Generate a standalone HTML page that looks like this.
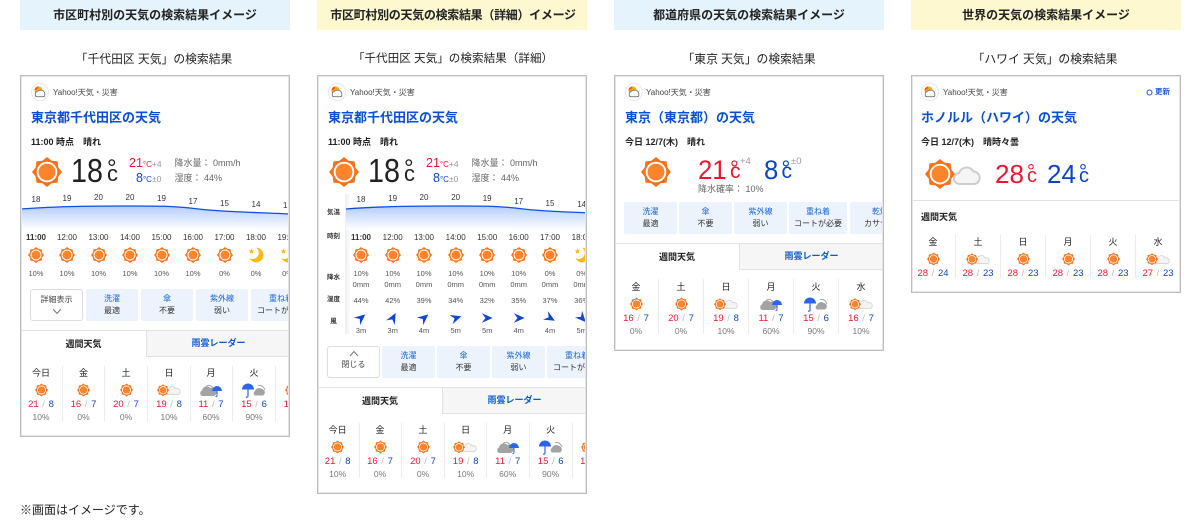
<!DOCTYPE html>
<html lang="ja"><head><meta charset="utf-8"><title>天気の検索結果イメージ</title>
<style>
*{box-sizing:border-box}
html,body{margin:0;padding:0;width:1200px;height:520px;overflow:hidden;background:#fff}
body{position:relative;font-family:"Liberation Sans","Noto Sans CJK JP",sans-serif;color:#333;filter:blur(.3px)}
.a,.c,.clip>*,body>span,body>svg{position:absolute}
.a,.c{line-height:12px;white-space:nowrap}
.c{width:120px;margin-left:-60px;text-align:center}
.clip{position:absolute;left:0;top:0;width:1200px;height:520px}
.hd{position:absolute;top:0;width:270px;height:30px;line-height:30px;text-align:center;font-size:12px;font-weight:700;color:#222}
.bl{background:#e5f3fd}.ye{background:#fdf8cf}
.sub{position:absolute;top:51px;width:270px;text-align:center;font-size:11.8px;line-height:16px;color:#222}
.bd{position:absolute;border:1px solid #bdbdbd;box-shadow:inset 0 0 0 1px #e6e6e6;background:transparent}
.y{font-size:8px;color:#444;top:87px}
.ti{font-size:13px;font-weight:700;color:#0b50d0;top:110px;line-height:16px}
.dt{font-size:9px;font-weight:700;color:#222;top:136px}
.g{font-size:9px;color:#666}
.tp{font-size:8px;color:#333}
.h{position:absolute;width:32px;margin-left:-16px;text-align:center;font-size:7.5px;line-height:12px;color:#555;white-space:nowrap}
.h i{display:block;font-style:normal;font-size:8px;height:14px;line-height:14px;color:#333;margin-left:-8px;width:48px}
.h svg{display:block;width:16px;height:16px;margin:2px auto 5px}
.h u{display:block;text-decoration:none;height:12px}
.h u.m{height:10px;line-height:10px}
.h u.hu{margin-top:5px}
.h svg.w{width:12px;height:12px;margin:5px auto 1px}
.btn{position:absolute;width:53px;height:32px;border:1px solid #ddd;border-radius:3px;background:#fff;font-size:8px;line-height:12px;text-align:center;color:#444}
.ch{position:absolute;height:32px;background:#edf3fd;border-radius:2px;text-align:center;font-size:8px;line-height:12px;padding-top:4px;color:#333;white-space:nowrap;overflow:hidden}
.ch b{display:block;font-weight:400;color:#1765d8}
.tl{position:absolute;height:26px;background:#fff;line-height:26px;text-align:center;font-size:9px;font-weight:700;color:#222}
.tr{position:absolute;height:27px;background:#f6f6f6;border-top:1px solid #e2e2e2;border-left:1px solid #e2e2e2;border-bottom:1px solid #e2e2e2;line-height:25px;text-align:center;font-size:9px;font-weight:700;color:#0b5bd0}
.ln{position:absolute;height:1px;background:#e2e2e2}
.sp{position:absolute;width:1px;background:#ececec}
.k{position:absolute;width:44px;margin-left:-22px;text-align:center;white-space:nowrap;font-size:8.5px;line-height:12px;color:#777}
.k i{display:block;font-style:normal;font-size:9px;line-height:14px;color:#222}
.k svg{display:block;height:16px;margin:2px auto 1px}
.k span{display:block;font-size:9.5px;line-height:12px;color:#bbb;word-spacing:1px}
.k span b{font-weight:400}
.r{color:#f0152f}.b{color:#0b44c8}
.big{font-size:33px;line-height:32px;transform:scaleX(.87);transform-origin:left}
.big3{font-size:27px;line-height:32px;transform:scaleX(.95);transform-origin:left}
.lab{font-size:6.5px;font-weight:700}
</style></head><body>
<svg width="0" height="0" style="position:absolute"><defs>
<linearGradient id="gr" x1="0" y1="0" x2="0" y2="1"><stop offset="0" stop-color="#b4cdfa"/><stop offset="1" stop-color="#fff"/></linearGradient>
<symbol id="sun" viewBox="0 0 32 32"><polygon fill="#f6721a" points="32,16 28,21 27.300,27.300 21,28 16,32 11,28 4.700,27.300 4,21 0,16 4,11 4.700,4.700 11,4 16,0 21,4 27.300,4.700 28,11"/><circle cx="16" cy="16" r="11" fill="#fff"/><circle cx="16" cy="16" r="9" fill="#fd842b"/></symbol>
<symbol id="moon" viewBox="0 0 16 16"><path fill="#fdb913" d="M8 .8A7.300 7.300 0 1 1 1.500 11 A5.500 5.500 0 0 0 8 .8Z"/><polygon fill="#fdb913" points="3.500,1.500 4.300,3.300 6.200,3.500 4.800,4.700 5.200,6.600 3.500,5.600 1.800,6.600 2.200,4.700 .8,3.500 2.700,3.300"/></symbol>
<symbol id="cl" viewBox="0 0 26 16"><path fill="#f4f4f4" stroke="#cfcfcf" stroke-width="1.200" d="M5 14.500A4 4 0 0 1 4.500 7 6 6 0 0 1 16 5.500 4.600 4.600 0 0 1 20.500 14.500Z"/></symbol>
<symbol id="clb" viewBox="0 0 28 22"><path fill="#f5f5f5" stroke="#cdcdcd" stroke-width="2" d="M7 21A5.500 5.500 0 0 1 6 10 8 8 0 0 1 20.500 8.500 6.300 6.300 0 0 1 21.500 21Z"/></symbol>
<symbol id="sc" viewBox="0 0 26 16"><use href="#cl" x="9" y="0" width="17" height="11" transform="translate(0 3)"/><use href="#sun" x="0" y="2" width="12.500" height="12.500"/></symbol>
<symbol id="cu" viewBox="0 0 24 16"><path fill="#a3a3a3" d="M3 14A3 3 0 0 1 3 8.500 5 5 0 0 1 11.500 6 4 4 0 0 1 15 14Z"/><path fill="none" stroke="#a3a3a3" d="M7 4.500Q11 1.500 14 6"/><path fill="#2b66e8" d="M13 9A5 5 0 0 1 23 9Z"/><path fill="none" stroke="#2b66e8" d="M18 8V13.500Q18 15 16.500 14.500"/></symbol>
<symbol id="uc" viewBox="0 0 24 16"><path fill="#2b66e8" d="M0 7.500A6 6 0 0 1 12 7.500Z"/><path fill="none" stroke="#2b66e8" stroke-width="1.200" d="M6 7V14Q6 15.500 4 15"/><path fill="#a3a3a3" d="M13 13.500A2.500 2.500 0 0 1 13 9 4.500 4.500 0 0 1 20 7 3.500 3.500 0 0 1 21 13.500Z"/><path fill="none" stroke="#a3a3a3" d="M16 3.500Q21 2.500 23 8"/></symbol>
<symbol id="ar" viewBox="0 0 16 16"><path fill="#1246d2" d="M15.500 8L1 1.500 6 8 1 14.500Z"/></symbol>
<symbol id="lg" viewBox="0 0 18 18"><circle cx="9" cy="9" r="8.500" fill="#fff" stroke="#e8e8e8"/><circle cx="7.500" cy="7.500" r="4" fill="#f9a51c"/><path fill="#ee5a18" d="M3.500 7.500A4 4 0 0 1 7.500 3.500L6.500 6Z"/><path fill="#fff" stroke="#777" stroke-width=".9" d="M5.800 13.700Q4.300 13.700 4.300 12.200V10.500Q4.300 8.800 6 8.800 7 7 10 7.200 13.500 7.500 13.800 10.500V12.200Q13.800 13.700 12.300 13.700Z"/></symbol>
</defs></svg>

<div class="hd bl" style="left:20px">市区町村別の天気の検索結果イメージ</div>
<div class="hd ye" style="left:317px;letter-spacing:-.3px;padding-left:2px">市区町村別の天気の検索結果（詳細）イメージ</div>
<div class="hd bl" style="left:614px">都道府県の天気の検索結果イメージ</div>
<div class="hd ye" style="left:911px">世界の天気の検索結果イメージ</div>
<div class="sub" style="left:19px">「千代田区 天気」の検索結果</div>
<div class="sub" style="left:318px;font-size:11.6px">「千代田区 天気」の検索結果（詳細）</div>
<div class="sub" style="left:614px">「東京 天気」の検索結果</div>
<div class="sub" style="left:910px">「ハワイ 天気」の検索結果</div>

<!-- CARD 1 -->
<div class="clip" style="clip-path:inset(75px 910px 83px 20px)">
<svg style="left:31px;top:83px" width="18" height="18"><use href="#lg"/></svg>
<span class="a y" style="left:53px">Yahoo!天気・災害</span>
<span class="a ti" style="left:31px">東京都千代田区の天気</span>
<span class="a dt" style="left:31px">11:00 時点　晴れ</span>
<svg style="left:32px;top:157px" width="30" height="30"><use href="#sun"/></svg>
<span class="a big" style="left:71px;top:155px;color:#222">18</span>
<span class="a" style="left:107px;top:163px;font-size:24px;color:#222">°</span>
<span class="a" style="left:107px;top:168px;font-size:22px;color:#222">c</span>
<span class="a" style="left:129px;top:157px;font-size:12.500px"><span class="r">21</span><span class="r" style="font-size:8px">°C</span><span style="font-size:8.500px;color:#999">+4</span></span>
<span class="a" style="left:136px;top:172px;font-size:12.500px"><span class="b">8</span><span class="b" style="font-size:8px">°C</span><span style="font-size:8.500px;color:#999">±0</span></span>
<span class="a g" style="left:174.500px;top:157px">降水量： 0mm/h</span>
<span class="a g" style="left:174.500px;top:172px">湿度： 44%</span>
<span class="c tp" style="left:36px;top:194px">18</span><span class="c tp" style="left:67px;top:193px">19</span><span class="c tp" style="left:98.500px;top:192px">20</span><span class="c tp" style="left:130px;top:192px">20</span><span class="c tp" style="left:161.500px;top:193px">19</span><span class="c tp" style="left:193px;top:196px">17</span><span class="c tp" style="left:224.500px;top:198px">15</span><span class="c tp" style="left:256px;top:199px">14</span><span class="c tp" style="left:287.500px;top:200px">13</span>
<svg style="left:0;top:0" width="1200" height="520"><path fill="url(#gr)" d="M21 209C60 206 100 206 130 206 160 206 170 206 190 208 220 212 250 212 290 214V230H21Z"/><path fill="none" stroke="#0b50e0" stroke-width="1.300" d="M21 209C60 206 100 206 130 206 160 206 170 206 190 208 220 212 250 212 290 214"/></svg>
<div class="h" style="left:36px;top:231px"><i><b>11:00</b></i><svg><use href="#sun"/></svg><u>10%</u></div>
<div class="h" style="left:67px;top:231px"><i>12:00</i><svg><use href="#sun"/></svg><u>10%</u></div>
<div class="h" style="left:98.500px;top:231px"><i>13:00</i><svg><use href="#sun"/></svg><u>10%</u></div>
<div class="h" style="left:130px;top:231px"><i>14:00</i><svg><use href="#sun"/></svg><u>10%</u></div>
<div class="h" style="left:161.500px;top:231px"><i>15:00</i><svg><use href="#sun"/></svg><u>10%</u></div>
<div class="h" style="left:193px;top:231px"><i>16:00</i><svg><use href="#sun"/></svg><u>10%</u></div>
<div class="h" style="left:224.500px;top:231px"><i>17:00</i><svg><use href="#sun"/></svg><u>0%</u></div>
<div class="h" style="left:256px;top:231px"><i>18:00</i><svg><use href="#moon"/></svg><u>0%</u></div>
<div class="h" style="left:287.500px;top:231px"><i>19:00</i><svg><use href="#moon"/></svg><u>0%</u></div>
<div class="btn" style="left:30px;top:289px;padding-top:4px">詳細表示<svg style="display:block;margin:2px auto 0" width="10" height="7"><path d="M1 1L5 5.500 9 1" fill="none" stroke="#777"/></svg></div>
<div class="ch" style="left:86px;top:289px;width:52px"><b>洗濯</b>最適</div>
<div class="ch" style="left:141px;top:289px;width:52px"><b>傘</b>不要</div>
<div class="ch" style="left:196px;top:289px;width:52px"><b>紫外線</b>弱い</div>
<div class="ch" style="left:251px;top:289px;width:60px"><b>重ね着</b>コートが必要</div>
<div class="ln" style="left:20px;top:330px;width:270px"></div>
<div class="tl" style="left:21px;top:331px;width:125px">週間天気</div>
<div class="tr" style="left:146px;top:330px;width:150px;padding-right:6px">雨雲レーダー</div>
<div class="sp" style="left:62px;top:366px;height:55px"></div><div class="sp" style="left:104px;top:366px;height:55px"></div><div class="sp" style="left:147px;top:366px;height:55px"></div><div class="sp" style="left:190px;top:366px;height:55px"></div><div class="sp" style="left:232px;top:366px;height:55px"></div><div class="sp" style="left:275px;top:366px;height:55px"></div>
<div class="k" style="left:41px;top:366px"><i>今日</i><svg width="13" height="16"><use href="#sun" y="1.500" width="13" height="13"/></svg><span><b class="r">21</b> / <b class="b">8</b></span>10%</div>
<div class="k" style="left:83.500px;top:366px"><i>金</i><svg width="13" height="16"><use href="#sun" y="1.500" width="13" height="13"/></svg><span><b class="r">16</b> / <b class="b">7</b></span>0%</div>
<div class="k" style="left:126px;top:366px"><i>土</i><svg width="13" height="16"><use href="#sun" y="1.500" width="13" height="13"/></svg><span><b class="r">20</b> / <b class="b">7</b></span>0%</div>
<div class="k" style="left:169px;top:366px"><i>日</i><svg width="25" height="16"><use href="#sc"/></svg><span><b class="r">19</b> / <b class="b">8</b></span>10%</div>
<div class="k" style="left:211px;top:366px"><i>月</i><svg width="24" height="16"><use href="#cu"/></svg><span><b class="r">11</b> / <b class="b">7</b></span>60%</div>
<div class="k" style="left:254px;top:366px"><i>火</i><svg width="24" height="16"><use href="#uc"/></svg><span><b class="r">15</b> / <b class="b">6</b></span>90%</div>
<div class="k" style="left:296.500px;top:366px"><i>水</i><svg width="25" height="16" style="margin-left:10px"><use href="#sc"/></svg><span><b class="r">16</b> / <b class="b">7</b></span>10%</div>
</div>
<div class="bd" style="left:20px;top:75px;width:270px;height:362px"></div>

<!-- CARD 2 -->
<div class="clip" style="clip-path:inset(75px 613px 26px 317px)">
<svg style="left:328px;top:83px" width="18" height="18"><use href="#lg"/></svg>
<span class="a y" style="left:350px">Yahoo!天気・災害</span>
<span class="a ti" style="left:328px">東京都千代田区の天気</span>
<span class="a dt" style="left:328px">11:00 時点　晴れ</span>
<svg style="left:329px;top:157px" width="30" height="30"><use href="#sun"/></svg>
<span class="a big" style="left:368px;top:155px;color:#222">18</span>
<span class="a" style="left:404px;top:163px;font-size:24px;color:#222">°</span>
<span class="a" style="left:404px;top:168px;font-size:22px;color:#222">c</span>
<span class="a" style="left:426px;top:157px;font-size:12.500px"><span class="r">21</span><span class="r" style="font-size:8px">°C</span><span style="font-size:8.500px;color:#999">+4</span></span>
<span class="a" style="left:433px;top:172px;font-size:12.500px"><span class="b">8</span><span class="b" style="font-size:8px">°C</span><span style="font-size:8.500px;color:#999">±0</span></span>
<span class="a g" style="left:471.500px;top:157px">降水量： 0mm/h</span>
<span class="a g" style="left:471.500px;top:172px">湿度： 44%</span>
<div style="left:345px;top:194px;width:6px;height:140px;background:linear-gradient(90deg,#eee,#fff)"></div>
<span class="c lab" style="left:333.500px;top:207px">気温</span>
<span class="c lab" style="left:333.500px;top:231px">時刻</span>
<span class="c lab" style="left:333.500px;top:272px">降水</span>
<span class="c lab" style="left:333.500px;top:294px">湿度</span>
<span class="c lab" style="left:333.500px;top:316px">風</span>
<span class="c tp" style="left:361px;top:194px">18</span><span class="c tp" style="left:392.700px;top:193px">19</span><span class="c tp" style="left:424px;top:192px">20</span><span class="c tp" style="left:455.700px;top:192px">20</span><span class="c tp" style="left:487.200px;top:193px">19</span><span class="c tp" style="left:518.700px;top:196px">17</span><span class="c tp" style="left:550px;top:198px">15</span><span class="c tp" style="left:581.700px;top:199px">14</span>
<svg style="left:0;top:0" width="1200" height="520"><path fill="url(#gr)" d="M346 209C385 206 425 206 455 206 485 206 495 206 515 208 545 212 575 212 615 214V230H346Z"/><path fill="none" stroke="#0b50e0" stroke-width="1.300" d="M346 209C385 206 425 206 455 206 485 206 495 206 515 208 545 212 575 212 615 214"/></svg>
<div class="h" style="left:361px;top:231px"><i><b>11:00</b></i><svg><use href="#sun"/></svg><u>10%</u><u class="m">0mm</u><u class="hu">44%</u><svg class="w" style="transform:rotate(-40deg)"><use href="#ar"/></svg><u>3m</u></div>
<div class="h" style="left:392.700px;top:231px"><i>12:00</i><svg><use href="#sun"/></svg><u>10%</u><u class="m">0mm</u><u class="hu">42%</u><svg class="w" style="transform:rotate(-62deg)"><use href="#ar"/></svg><u>3m</u></div>
<div class="h" style="left:424px;top:231px"><i>13:00</i><svg><use href="#sun"/></svg><u>10%</u><u class="m">0mm</u><u class="hu">39%</u><svg class="w" style="transform:rotate(-40deg)"><use href="#ar"/></svg><u>4m</u></div>
<div class="h" style="left:455.700px;top:231px"><i>14:00</i><svg><use href="#sun"/></svg><u>10%</u><u class="m">0mm</u><u class="hu">34%</u><svg class="w" style="transform:rotate(-18deg)"><use href="#ar"/></svg><u>5m</u></div>
<div class="h" style="left:487.200px;top:231px"><i>15:00</i><svg><use href="#sun"/></svg><u>10%</u><u class="m">0mm</u><u class="hu">32%</u><svg class="w"><use href="#ar"/></svg><u>5m</u></div>
<div class="h" style="left:518.700px;top:231px"><i>16:00</i><svg><use href="#sun"/></svg><u>10%</u><u class="m">0mm</u><u class="hu">35%</u><svg class="w"><use href="#ar"/></svg><u>4m</u></div>
<div class="h" style="left:550px;top:231px"><i>17:00</i><svg><use href="#sun"/></svg><u>0%</u><u class="m">0mm</u><u class="hu">37%</u><svg class="w" style="transform:rotate(30deg)"><use href="#ar"/></svg><u>4m</u></div>
<div class="h" style="left:581.700px;top:231px"><i>18:00</i><svg><use href="#moon"/></svg><u>0%</u><u class="m">0mm</u><u class="hu">36%</u><svg class="w" style="transform:rotate(48deg)"><use href="#ar"/></svg><u>5m</u></div>
<div class="btn" style="left:327px;top:346px;padding-top:3px"><svg style="display:block;margin:0 auto 2px" width="10" height="7"><path d="M1 6L5 1.500 9 6" fill="none" stroke="#777"/></svg>閉じる</div>
<div class="ch" style="left:382px;top:346px;width:53px"><b>洗濯</b>最適</div>
<div class="ch" style="left:437px;top:346px;width:53px"><b>傘</b>不要</div>
<div class="ch" style="left:492px;top:346px;width:53px"><b>紫外線</b>弱い</div>
<div class="ch" style="left:547px;top:346px;width:60px"><b>重ね着</b>コートが必要</div>
<div class="ln" style="left:317px;top:387px;width:270px"></div>
<div class="tl" style="left:318px;top:388px;width:124px">週間天気</div>
<div class="tr" style="left:442px;top:387px;width:150px;padding-right:6px">雨雲レーダー</div>
<div class="sp" style="left:359px;top:423px;height:55px"></div><div class="sp" style="left:401px;top:423px;height:55px"></div><div class="sp" style="left:444px;top:423px;height:55px"></div><div class="sp" style="left:486px;top:423px;height:55px"></div><div class="sp" style="left:529px;top:423px;height:55px"></div><div class="sp" style="left:572px;top:423px;height:55px"></div>
<div class="k" style="left:337.700px;top:423px"><i>今日</i><svg width="13" height="16"><use href="#sun" y="1.500" width="13" height="13"/></svg><span><b class="r">21</b> / <b class="b">8</b></span>10%</div>
<div class="k" style="left:380px;top:423px"><i>金</i><svg width="13" height="16"><use href="#sun" y="1.500" width="13" height="13"/></svg><span><b class="r">16</b> / <b class="b">7</b></span>0%</div>
<div class="k" style="left:423px;top:423px"><i>土</i><svg width="13" height="16"><use href="#sun" y="1.500" width="13" height="13"/></svg><span><b class="r">20</b> / <b class="b">7</b></span>0%</div>
<div class="k" style="left:465.700px;top:423px"><i>日</i><svg width="25" height="16"><use href="#sc"/></svg><span><b class="r">19</b> / <b class="b">8</b></span>10%</div>
<div class="k" style="left:507.700px;top:423px"><i>月</i><svg width="24" height="16"><use href="#cu"/></svg><span><b class="r">11</b> / <b class="b">7</b></span>60%</div>
<div class="k" style="left:550.700px;top:423px"><i>火</i><svg width="24" height="16"><use href="#uc"/></svg><span><b class="r">15</b> / <b class="b">6</b></span>90%</div>
<div class="k" style="left:593px;top:423px"><i>水</i><svg width="25" height="16" style="margin-left:10px"><use href="#sc"/></svg><span><b class="r">16</b> / <b class="b">7</b></span>10%</div>
</div>
<div class="bd" style="left:317px;top:75px;width:270px;height:419px"></div>

<!-- CARD 3 -->
<div class="clip" style="clip-path:inset(75px 316px 169px 614px)">
<svg style="left:625px;top:83px" width="18" height="18"><use href="#lg"/></svg>
<span class="a y" style="left:646px">Yahoo!天気・災害</span>
<span class="a ti" style="left:625px">東京（東京都）の天気</span>
<span class="a dt" style="left:625px">今日 12/7(木)　晴れ</span>
<svg style="left:641px;top:157px" width="30" height="30"><use href="#sun"/></svg>
<span class="a big3 r" style="left:698px;top:154px">21</span>
<span class="a r" style="left:730px;top:163px;font-size:22px">°</span>
<span class="a r" style="left:730px;top:166px;font-size:21px">c</span>
<span class="a" style="left:740px;top:156px;font-size:9.500px;color:#999">+4</span>
<span class="a big3 b" style="left:764px;top:154px">8</span>
<span class="a b" style="left:781.500px;top:163px;font-size:22px">°</span>
<span class="a b" style="left:781.500px;top:166px;font-size:21px">c</span>
<span class="a" style="left:791px;top:156px;font-size:9.500px;color:#999">±0</span>
<span class="a g" style="left:698px;top:183px">降水確率： 10%</span>
<div class="ch" style="left:624px;top:202px;width:53px"><b>洗濯</b>最適</div>
<div class="ch" style="left:679px;top:202px;width:53px"><b>傘</b>不要</div>
<div class="ch" style="left:734px;top:202px;width:53px"><b>紫外線</b>弱い</div>
<div class="ch" style="left:789px;top:202px;width:58px"><b>重ね着</b>コートが必要</div>
<div class="ch" style="left:850px;top:202px;width:60px"><b>乾燥</b>カサつく</div>
<div class="ln" style="left:614px;top:243px;width:270px"></div>
<div class="tl" style="left:615px;top:244px;width:124px">週間天気</div>
<div class="tr" style="left:739px;top:243px;width:150px;padding-right:6px">雨雲レーダー</div>
<div class="sp" style="left:658px;top:279px;height:55px"></div><div class="sp" style="left:703px;top:279px;height:55px"></div><div class="sp" style="left:748px;top:279px;height:55px"></div><div class="sp" style="left:793px;top:279px;height:55px"></div><div class="sp" style="left:838px;top:279px;height:55px"></div>
<div class="k" style="left:636px;top:280px"><i>金</i><svg width="13" height="16"><use href="#sun" y="1.500" width="13" height="13"/></svg><span><b class="r">16</b> / <b class="b">7</b></span>0%</div>
<div class="k" style="left:681px;top:280px"><i>土</i><svg width="13" height="16"><use href="#sun" y="1.500" width="13" height="13"/></svg><span><b class="r">20</b> / <b class="b">7</b></span>0%</div>
<div class="k" style="left:726px;top:280px"><i>日</i><svg width="25" height="16"><use href="#sc"/></svg><span><b class="r">19</b> / <b class="b">8</b></span>10%</div>
<div class="k" style="left:771px;top:280px"><i>月</i><svg width="24" height="16"><use href="#cu"/></svg><span><b class="r">11</b> / <b class="b">7</b></span>60%</div>
<div class="k" style="left:816px;top:280px"><i>火</i><svg width="24" height="16"><use href="#uc"/></svg><span><b class="r">15</b> / <b class="b">6</b></span>90%</div>
<div class="k" style="left:861px;top:280px"><i>水</i><svg width="25" height="16"><use href="#sc"/></svg><span><b class="r">16</b> / <b class="b">7</b></span>10%</div>
</div>
<div class="bd" style="left:614px;top:75px;width:270px;height:276px"></div>

<!-- CARD 4 -->
<div class="clip">
<svg style="left:921px;top:83px" width="18" height="18"><use href="#lg"/></svg>
<span class="a y" style="left:943px">Yahoo!天気・災害</span>
<svg style="left:1145.500px;top:88.500px" width="7" height="7"><circle cx="3.500" cy="3.500" r="2.500" fill="none" stroke="#1a5bd0"/></svg>
<span class="a" style="left:1155px;top:86px;font-size:7.500px;font-weight:700;color:#1a5bd0">更新</span>
<span class="a ti" style="left:921px">ホノルル（ハワイ）の天気</span>
<span class="a dt" style="left:921px">今日 12/7(木)　晴時々曇</span>
<svg style="left:953px;top:163px" width="28" height="22"><use href="#clb"/></svg>
<svg style="left:925px;top:159px" width="30" height="30"><use href="#sun"/></svg>
<span class="a r" style="left:995px;top:159px;font-size:26px;line-height:30px">28</span>
<span class="a r" style="left:1027px;top:166px;font-size:20px">°</span>
<span class="a r" style="left:1027px;top:170px;font-size:20px">c</span>
<span class="a b" style="left:1047px;top:159px;font-size:26px;line-height:30px">24</span>
<span class="a b" style="left:1079px;top:166px;font-size:20px">°</span>
<span class="a b" style="left:1079px;top:170px;font-size:20px">c</span>
<div class="ln" style="left:911px;top:200px;width:270px"></div>
<span class="a" style="left:921px;top:211px;font-size:9px;font-weight:700;color:#222">週間天気</span>
<div class="sp" style="left:955px;top:235px;height:43px"></div><div class="sp" style="left:1000px;top:235px;height:43px"></div><div class="sp" style="left:1045px;top:235px;height:43px"></div><div class="sp" style="left:1090px;top:235px;height:43px"></div><div class="sp" style="left:1135px;top:235px;height:43px"></div>
<div class="k" style="left:933px;top:235px"><i>金</i><svg width="13" height="16"><use href="#sun" y="1.500" width="13" height="13"/></svg><span><b class="r">28</b> / <b class="b">24</b></span></div>
<div class="k" style="left:978px;top:235px"><i>土</i><svg width="25" height="16"><use href="#sc"/></svg><span><b class="r">28</b> / <b class="b">23</b></span></div>
<div class="k" style="left:1023px;top:235px"><i>日</i><svg width="13" height="16"><use href="#sun" y="1.500" width="13" height="13"/></svg><span><b class="r">28</b> / <b class="b">23</b></span></div>
<div class="k" style="left:1068px;top:235px"><i>月</i><svg width="13" height="16"><use href="#sun" y="1.500" width="13" height="13"/></svg><span><b class="r">28</b> / <b class="b">23</b></span></div>
<div class="k" style="left:1113px;top:235px"><i>火</i><svg width="13" height="16"><use href="#sun" y="1.500" width="13" height="13"/></svg><span><b class="r">28</b> / <b class="b">23</b></span></div>
<div class="k" style="left:1158px;top:235px"><i>水</i><svg width="25" height="16"><use href="#sc"/></svg><span><b class="r">27</b> / <b class="b">23</b></span></div>
</div>
<div class="bd" style="left:911px;top:75px;width:270px;height:218px"></div>

<span style="left:20px;top:502px;font-size:12px;line-height:16px;color:#222">※画面はイメージです。</span>
</body></html>
